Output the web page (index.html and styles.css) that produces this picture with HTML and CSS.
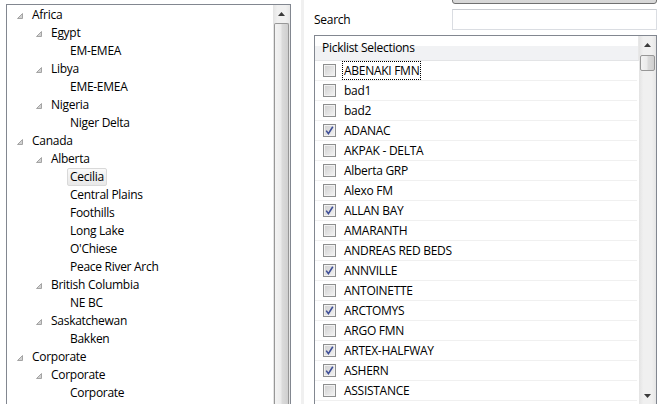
FILE: index.html
```html
<!DOCTYPE html>
<html>
<head>
<meta charset="utf-8">
<link rel="stylesheet" href="styles.css">
</head>
<body>
<div class="app">
  <div class="tree-pane">
    <div class="tree">
      <div class="node l0"><span class="tw"><svg width="6" height="6" viewBox="0 0 6 6"><path d="M5.5 0.5 L5.5 5.5 L0.5 5.5 Z" fill="#d2d2d2" stroke="#a4a4a4" stroke-width="1"/></svg></span><span class="label">Africa</span></div>
      <div class="node l1"><span class="tw"><svg width="6" height="6" viewBox="0 0 6 6"><path d="M5.5 0.5 L5.5 5.5 L0.5 5.5 Z" fill="#d2d2d2" stroke="#a4a4a4" stroke-width="1"/></svg></span><span class="label">Egypt</span></div>
      <div class="node l2"><span class="tw"></span><span class="label">EM-EMEA</span></div>
      <div class="node l1"><span class="tw"><svg width="6" height="6" viewBox="0 0 6 6"><path d="M5.5 0.5 L5.5 5.5 L0.5 5.5 Z" fill="#d2d2d2" stroke="#a4a4a4" stroke-width="1"/></svg></span><span class="label">Libya</span></div>
      <div class="node l2"><span class="tw"></span><span class="label">EME-EMEA</span></div>
      <div class="node l1"><span class="tw"><svg width="6" height="6" viewBox="0 0 6 6"><path d="M5.5 0.5 L5.5 5.5 L0.5 5.5 Z" fill="#d2d2d2" stroke="#a4a4a4" stroke-width="1"/></svg></span><span class="label">Nigeria</span></div>
      <div class="node l2"><span class="tw"></span><span class="label">Niger Delta</span></div>
      <div class="node l0"><span class="tw"><svg width="6" height="6" viewBox="0 0 6 6"><path d="M5.5 0.5 L5.5 5.5 L0.5 5.5 Z" fill="#d2d2d2" stroke="#a4a4a4" stroke-width="1"/></svg></span><span class="label">Canada</span></div>
      <div class="node l1"><span class="tw"><svg width="6" height="6" viewBox="0 0 6 6"><path d="M5.5 0.5 L5.5 5.5 L0.5 5.5 Z" fill="#d2d2d2" stroke="#a4a4a4" stroke-width="1"/></svg></span><span class="label">Alberta</span></div>
      <div class="node l2"><span class="tw"></span><span class="label selected">Cecilia</span></div>
      <div class="node l2"><span class="tw"></span><span class="label">Central Plains</span></div>
      <div class="node l2"><span class="tw"></span><span class="label">Foothills</span></div>
      <div class="node l2"><span class="tw"></span><span class="label">Long Lake</span></div>
      <div class="node l2"><span class="tw"></span><span class="label">O'Chiese</span></div>
      <div class="node l2"><span class="tw"></span><span class="label">Peace River Arch</span></div>
      <div class="node l1"><span class="tw"><svg width="6" height="6" viewBox="0 0 6 6"><path d="M5.5 0.5 L5.5 5.5 L0.5 5.5 Z" fill="#d2d2d2" stroke="#a4a4a4" stroke-width="1"/></svg></span><span class="label">British Columbia</span></div>
      <div class="node l2"><span class="tw"></span><span class="label">NE BC</span></div>
      <div class="node l1"><span class="tw"><svg width="6" height="6" viewBox="0 0 6 6"><path d="M5.5 0.5 L5.5 5.5 L0.5 5.5 Z" fill="#d2d2d2" stroke="#a4a4a4" stroke-width="1"/></svg></span><span class="label">Saskatchewan</span></div>
      <div class="node l2"><span class="tw"></span><span class="label">Bakken</span></div>
      <div class="node l0"><span class="tw"><svg width="6" height="6" viewBox="0 0 6 6"><path d="M5.5 0.5 L5.5 5.5 L0.5 5.5 Z" fill="#d2d2d2" stroke="#a4a4a4" stroke-width="1"/></svg></span><span class="label">Corporate</span></div>
      <div class="node l1"><span class="tw"><svg width="6" height="6" viewBox="0 0 6 6"><path d="M5.5 0.5 L5.5 5.5 L0.5 5.5 Z" fill="#d2d2d2" stroke="#a4a4a4" stroke-width="1"/></svg></span><span class="label">Corporate</span></div>
      <div class="node l2"><span class="tw"></span><span class="label">Corporate</span></div>
    </div>
    <div class="vscroll">
      <div class="sb-btn"><svg width="7" height="4" viewBox="0 0 7 4"><path d="M0 4 L3.5 0 L7 4 Z" fill="#3a3a3a"/></svg></div>
      <div class="thumb thumb-long"></div>
    </div>
  </div>
  <div class="sash"></div>
  <div class="right-pane">
    <div class="top-btn"></div>
    <div class="search-row">
      <span class="search-label">Search</span>
      <span class="search-input"></span>
    </div>
    <div class="picklist">
      <div class="list">
        <div class="list-header">Picklist Selections</div>
        <div class="row"><span class="cb"></span><span class="item focus">ABENAKI FMN</span></div>
        <div class="row"><span class="cb"></span><span class="item">bad1</span></div>
        <div class="row"><span class="cb"></span><span class="item">bad2</span></div>
        <div class="row"><span class="cb checked"><svg width="11" height="11" viewBox="0 0 11 11"><path d="M2.2 5.6 L4.4 8.6 L8.8 1.8" fill="none" stroke="#3f4f98" stroke-width="1.6"/></svg></span><span class="item">ADANAC</span></div>
        <div class="row"><span class="cb"></span><span class="item">AKPAK - DELTA</span></div>
        <div class="row"><span class="cb"></span><span class="item">Alberta GRP</span></div>
        <div class="row"><span class="cb"></span><span class="item">Alexo FM</span></div>
        <div class="row"><span class="cb checked"><svg width="11" height="11" viewBox="0 0 11 11"><path d="M2.2 5.6 L4.4 8.6 L8.8 1.8" fill="none" stroke="#3f4f98" stroke-width="1.6"/></svg></span><span class="item">ALLAN BAY</span></div>
        <div class="row"><span class="cb"></span><span class="item">AMARANTH</span></div>
        <div class="row"><span class="cb"></span><span class="item">ANDREAS RED BEDS</span></div>
        <div class="row"><span class="cb checked"><svg width="11" height="11" viewBox="0 0 11 11"><path d="M2.2 5.6 L4.4 8.6 L8.8 1.8" fill="none" stroke="#3f4f98" stroke-width="1.6"/></svg></span><span class="item">ANNVILLE</span></div>
        <div class="row"><span class="cb"></span><span class="item">ANTOINETTE</span></div>
        <div class="row"><span class="cb checked"><svg width="11" height="11" viewBox="0 0 11 11"><path d="M2.2 5.6 L4.4 8.6 L8.8 1.8" fill="none" stroke="#3f4f98" stroke-width="1.6"/></svg></span><span class="item">ARCTOMYS</span></div>
        <div class="row"><span class="cb"></span><span class="item">ARGO FMN</span></div>
        <div class="row"><span class="cb checked"><svg width="11" height="11" viewBox="0 0 11 11"><path d="M2.2 5.6 L4.4 8.6 L8.8 1.8" fill="none" stroke="#3f4f98" stroke-width="1.6"/></svg></span><span class="item">ARTEX-HALFWAY</span></div>
        <div class="row"><span class="cb checked"><svg width="11" height="11" viewBox="0 0 11 11"><path d="M2.2 5.6 L4.4 8.6 L8.8 1.8" fill="none" stroke="#3f4f98" stroke-width="1.6"/></svg></span><span class="item">ASHERN</span></div>
        <div class="row"><span class="cb"></span><span class="item">ASSISTANCE</span></div>
      </div>
      <div class="vscroll list-scroll">
        <div class="sb-btn"><svg width="7" height="4" viewBox="0 0 7 4"><path d="M0 4 L3.5 0 L7 4 Z" fill="#3a3a3a"/></svg></div>
        <div class="thumb thumb-short"></div>
        <div class="track-fill"></div>
        <div class="sb-btn"><svg width="7" height="4" viewBox="0 0 7 4"><path d="M0 0 L3.5 4 L7 0 Z" fill="#3a3a3a"/></svg></div>
      </div>
    </div>
  </div>
</div>
</body>
</html>
```
FILE: styles.css
```css
html, body {
  margin: 0;
  padding: 0;
  background: #ffffff;
}
body {
  width: 668px;
  height: 404px;
  overflow: hidden;
  font-family: "Segoe UI", "Open Sans", sans-serif;
  font-size: 12px;
  letter-spacing: -0.28px;
  color: #000;
}
.app {
  display: flex;
  align-items: flex-start;
  height: 404px;
  overflow: hidden;
}

/* ---------- tree ---------- */
.tree-pane {
  margin-left: 6px;
  margin-top: 4px;
  width: 285px;
  height: 400px;
  box-sizing: border-box;
  border: 1px solid #828790;
  border-bottom: none;
  display: flex;
  flex: 0 0 auto;
  overflow: hidden;
}
.tree {
  flex: 1;
  padding-top: 1px;
}
.node {
  display: flex;
  align-items: center;
  height: 18px;
}
.node.l0 { padding-left: 8px; }
.node.l1 { padding-left: 27px; }
.node.l2 { padding-left: 46px; }
.tw {
  width: 14px;
  height: 18px;
  display: flex;
  align-items: center;
  flex: 0 0 auto;
}
.tw svg {
  margin-left: 2px;
  margin-top: 1px;
}
.label {
  line-height: 16px;
  padding: 0 2px;
  border: 1px solid transparent;
  border-radius: 2px;
  white-space: nowrap;
}
.label.selected {
  border-color: #d9d9d9;
  background: linear-gradient(#fafafa, #e8e8e8);
}

/* ---------- scrollbars ---------- */
.vscroll {
  width: 17px;
  flex: 0 0 auto;
  display: flex;
  flex-direction: column;
  background: linear-gradient(to right, #e3e3e3, #f0f0f0 25%, #f0f0f0 75%, #e6e6e6);
}
.sb-btn {
  height: 17px;
  display: flex;
  align-items: center;
  justify-content: center;
  flex: 0 0 auto;
}
.thumb {
  margin: 1px 1px 0 1px;
  box-sizing: border-box;
  border: 1px solid #979797;
  border-radius: 2px;
  background: linear-gradient(to right, #f3f3f3, #ebebeb 45%, #dbdbdb 55%, #cfcfcf);
}
.thumb-long {
  flex: 1;
  border-bottom: none;
  border-bottom-left-radius: 0;
  border-bottom-right-radius: 0;
}
.thumb-short {
  margin-top: 2px;
  height: 16px;
  flex: 0 0 auto;
}
.track-fill {
  flex: 1;
}

/* ---------- sash ---------- */
.sash {
  margin-left: 10px;
  width: 3px;
  height: 404px;
  background: #f0f0f0;
  flex: 0 0 auto;
}

/* ---------- right pane ---------- */
.right-pane {
  margin-left: 10px;
  width: 343px;
  flex: 0 0 auto;
  display: flex;
  flex-direction: column;
}
.top-btn {
  align-self: flex-end;
  width: 205px;
  height: 22px;
  margin-top: -18px;
  box-sizing: border-box;
  border: 1px solid #707070;
  border-radius: 3px;
  background: linear-gradient(#f2f2f2, #e4e4e4 50%, #dcdcdc 51%, #d6d6d6);
}
.search-row {
  margin-top: 5px;
  display: flex;
  align-items: center;
  justify-content: space-between;
  height: 21px;
}
.search-label {
  line-height: 16px;
}
.search-input {
  width: 205px;
  height: 21px;
  box-sizing: border-box;
  border: 1px solid #dadde2;
  border-top-color: #c9ccd1;
  background: #fff;
}
.picklist {
  margin-top: 5px;
  height: 369px;
  box-sizing: border-box;
  border: 1px solid #828790;
  border-bottom: none;
  display: flex;
  overflow: hidden;
}
.list {
  flex: 1;
  overflow: hidden;
}
.list-header {
  height: 25px;
  box-sizing: border-box;
  padding-left: 7px;
  line-height: 24px;
  border-bottom: 1px solid #e3e4e6;
  border-right: 1px solid #e8e8e8;
  background: linear-gradient(#ffffff 0, #ffffff 10px, #f1f2f4 10px, #f1f2f4 100%);
}
.row {
  height: 20px;
  box-sizing: border-box;
  border-bottom: 1px solid #f0f0f0;
  display: flex;
  align-items: center;
  padding-left: 8px;
  margin-right: 2px;
}
.cb {
  width: 13px;
  height: 13px;
  box-sizing: border-box;
  border: 1px solid #8e8f8f;
  background: linear-gradient(135deg, #cfcfcf, #f4f4f4);
  box-shadow: inset 0 0 0 1px #f2f2f2;
  display: flex;
  align-items: center;
  justify-content: center;
  flex: 0 0 auto;
}
.item {
  margin-left: 6px;
  padding: 0 1px;
  line-height: 17px;
  border: 1px dotted transparent;
  white-space: nowrap;
}
.item.focus {
  border-color: #000;
}
.list-scroll {
  height: 368px;
}
```
